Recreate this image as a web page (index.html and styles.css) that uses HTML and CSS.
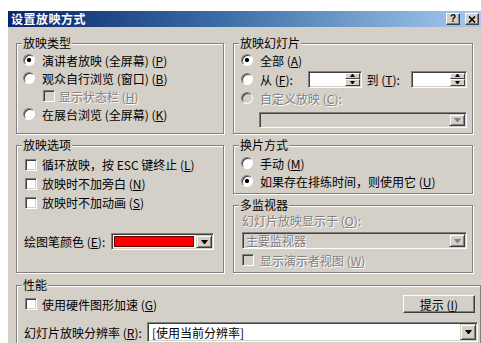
FILE: index.html
```html
<!DOCTYPE html>
<html lang="zh-CN">
<head>
  <meta charset="UTF-8">
  <title>设置放映方式</title>
  <link rel="stylesheet" href="styles.css">
</head>
<body>
  <div class="dialog">
    <div class="titlebar">
      <span class="title">设置放映方式</span>
      <div class="caption-btns">
        <span class="cbtn help">?</span>
        <span class="cbtn close"><svg width="8" height="7" viewBox="0 0 8 7"><path d="M1 0.5L7 6.5M7 0.5L1 6.5" stroke="#000" stroke-width="1.6"/></svg></span>
      </div>
    </div>

    <div class="content">
      <div class="columns">
        <!-- left column -->
        <div class="col col-left">
          <fieldset class="group g-type">
            <legend>放映类型</legend>
            <div class="row"><span class="radio on"></span>演讲者放映 (全屏幕) (<u>P</u>)</div>
            <div class="row"><span class="radio"></span>观众自行浏览 (窗口) (<u>B</u>)</div>
            <div class="row dis"><span class="check check-indent disabled"></span>显示状态栏 (<u>H</u>)</div>
            <div class="row"><span class="radio"></span>在展台浏览 (全屏幕) (<u>K</u>)</div>
          </fieldset>

          <fieldset class="group g-opts">
            <legend>放映选项</legend>
            <div class="row row-tall"><span class="check"></span>循环放映，按 ESC 键终止 (<u>L</u>)</div>
            <div class="row row-tall"><span class="check"></span>放映时不加旁白 (<u>N</u>)</div>
            <div class="row row-tall"><span class="check"></span>放映时不加动画 (<u>S</u>)</div>
            <div class="row pen-row">
              <span class="pen-label">绘图笔颜色 (<u>E</u>):</span>
              <div class="combo combo-pen">
                <span class="swatch"></span>
                <span class="drop"></span>
              </div>
            </div>
          </fieldset>
        </div>

        <!-- right column -->
        <div class="col col-right">
          <fieldset class="group g-slides">
            <legend>放映幻灯片</legend>
            <div class="row"><span class="radio on"></span>全部 (<u>A</u>)</div>
            <div class="row row-spin">
              <span class="radio"></span>
              <span class="from-label">从 (<u>F</u>):</span>
              <div class="spin spin-from">
                <span class="spin-field"></span>
                <span class="spin-btns"><span class="sbtn up"></span><span class="sbtn down"></span></span>
              </div>
              <span class="to-label">到 (<u>T</u>):</span>
              <div class="spin spin-to">
                <span class="spin-field"></span>
                <span class="spin-btns"><span class="sbtn up"></span><span class="sbtn down"></span></span>
              </div>
            </div>
            <div class="row dis"><span class="radio disabled"></span>自定义放映 (<u>C</u>):</div>
            <div class="combo combo-custom disabled">
              <span class="combo-text"></span>
              <span class="drop"></span>
            </div>
          </fieldset>

          <fieldset class="group g-switch">
            <legend>换片方式</legend>
            <div class="row"><span class="radio"></span>手动 (<u>M</u>)</div>
            <div class="row"><span class="radio on"></span>如果存在排练时间，则使用它 (<u>U</u>)</div>
          </fieldset>

          <fieldset class="group g-mon">
            <legend>多监视器</legend>
            <div class="row row-text dis">幻灯片放映显示于 (<u>O</u>):</div>
            <div class="combo combo-mon disabled">
              <span class="combo-text dis">主要监视器</span>
              <span class="drop"></span>
            </div>
            <div class="row row-mon dis"><span class="check disabled"></span>显示演示者视图 (<u>W</u>)</div>
          </fieldset>
        </div>
      </div>

      <fieldset class="group g-perf">
        <legend>性能</legend>
        <div class="row perf-row">
          <span class="check"></span><span>使用硬件图形加速 (<u>G</u>)</span>
          <span class="button">提示 (<u>I</u>)</span>
        </div>
        <div class="row res-row">
          <span class="res-label">幻灯片放映分辨率 (<u>R</u>):</span>
          <div class="combo combo-res">
            <span class="combo-text">[使用当前分辨率]</span>
            <span class="drop"></span>
          </div>
        </div>
      </fieldset>
    </div>
  </div>
</body>
</html>
```

FILE: styles.css
```css
*{
  margin: 0;
  padding: 0;
  box-sizing: border-box;
}
body{
  background-color: #fff;
  font-family: "Noto Sans CJK SC", "Noto Sans", sans-serif;
  font-size: 12px;
  color: #000;
}
u{
  text-decoration: underline;
  text-underline-offset: 1px;
}
.dialog{
  width: 473px;
  height: 332px;
  margin: 11px 0 0 8px;
  background-color: #d4d0c8;
  overflow: hidden;
}

/* title bar */
.titlebar{
  height: 16px;
  display: flex;
  align-items: center;
  justify-content: space-between;
  padding: 0 2px 0 3px;
  background: linear-gradient(to right, #0a246a, #3a6ea5 45%, #a6caf0);
}
.title{
  color: #fff;
  font-weight: 700;
  font-size: 12px;
  letter-spacing: 0.5px;
  line-height: 16px;
}
.caption-btns{
  display: flex;
  gap: 5px;
}
.cbtn{
  width: 14px;
  height: 12px;
  display: flex;
  align-items: center;
  justify-content: center;
  background-color: #d4d0c8;
  border: 1px solid;
  border-color: #fff #404040 #404040 #fff;
  box-shadow: inset -1px -1px #808080;
  font-family: "Liberation Sans", sans-serif;
  font-weight: 700;
  font-size: 10px;
  line-height: 10px;
}

/* layout */
.content{
  padding: 9px 0 0 8px;
  display: flex;
  flex-direction: column;
  gap: 5px;
}
.columns{
  display: flex;
  gap: 9px;
}
.col{
  display: flex;
  flex-direction: column;
  gap: 4px;
}
.col-left{ width: 208px; }
.col-right{ width: 240px; }

/* etched group boxes */
.group{
  border: 1px solid #808080;
  box-shadow: inset 1px 1px #fff, 1px 1px #fff;
  padding: 0 6px 0 6px;
  min-width: 0;
}
.group legend{
  padding: 0 1px;
  margin-left: -1px;
  line-height: 14px;
  background-color: #d4d0c8;
}
.g-type{ padding-top: 1px; padding-bottom: 10px; }
.g-opts{ padding-top: 3px; padding-bottom: 22px; }
.g-slides{ padding: 1px 5px 5px 7px; }
.g-slides legend{ margin-left: -2px; }
.g-switch{ padding: 2px 5px 3px 7px; }
.g-switch legend{ margin-left: -2px; }
.g-mon{ padding: 1px 5px 4px 8px; }
.g-mon legend{ margin-left: -3px; }
.g-perf{ padding: 3px 5px 0 6px; height: 70px; }

/* rows */
.row{
  display: flex;
  align-items: center;
  height: 18px;
  white-space: nowrap;
}
.row-tall{ height: 19px; }
.dis{
  color: #808080;
  text-shadow: 1px 1px #fff;
}

/* radio buttons */
.radio{
  flex: none;
  width: 12px;
  height: 12px;
  margin-right: 7px;
  border-radius: 50%;
  border: 1px solid;
  border-color: #808080 #fff #fff #808080;
  box-shadow: inset 1px 1px #404040;
  background-color: #fff;
}
.radio.on{
  background: radial-gradient(circle at 50% 50%, #000 0, #000 1.8px, #fff 2.4px);
}
.radio.disabled{
  background-color: #d4d0c8;
}

/* check boxes */
.check{
  flex: none;
  width: 12px;
  height: 12px;
  margin: 0 5px 0 2px;
  border: 1px solid;
  border-color: #808080 #fff #fff #808080;
  box-shadow: inset 1px 1px #404040, inset -1px -1px #d4d0c8;
  background-color: #fff;
}
.check.disabled{ background-color: #d4d0c8; }
.check-indent{ margin: 0 4px 0 20px; }

/* sunken fields with drop buttons */
.combo{
  display: flex;
  height: 17px;
  padding: 1px;
  background-color: #fff;
  border: 1px solid;
  border-color: #808080 #fff #fff #808080;
  box-shadow: inset 1px 1px #404040, inset -1px -1px #d4d0c8;
}
.combo.disabled{ background-color: #d4d0c8; }
.combo-text{
  flex: 1;
  display: flex;
  align-items: center;
  padding-left: 2px;
  white-space: nowrap;
}
.drop{
  flex: none;
  width: 16px;
  display: flex;
  align-items: center;
  justify-content: center;
  background-color: #d4d0c8;
  border: 1px solid;
  border-color: #d4d0c8 #404040 #404040 #d4d0c8;
  box-shadow: inset 1px 1px #fff, inset -1px -1px #808080;
}
.drop::before{
  content: "";
  width: 1px;
  height: 0;
  border-top: 4px solid #000;
  border-left: 3px solid transparent;
  border-right: 3px solid transparent;
}
.disabled .drop::before{ border-top-color: #808080; }

.pen-row{
  height: 17px;
  margin-top: 21px;
}
.pen-label{ width: 87px; margin-left: 1px; }
.combo-pen{
  width: 103px;
  gap: 2px;
}
.swatch{
  flex: 1;
  margin: 1px 0 1px 1px;
  background-color: #f00;
  border: 1px solid #600;
}

.row-spin{ height: 20px; }
.from-label{ width: 48px; }
.to-label{ width: 45px; margin-left: 5px; }
.spin{
  display: flex;
  height: 17px;
  padding: 1px;
  background-color: #fff;
  border: 1px solid;
  border-color: #808080 #fff #fff #808080;
  box-shadow: inset 1px 1px #404040, inset -1px -1px #d4d0c8;
}
.spin-from{ width: 54px; }
.spin-to{ width: 56px; }
.spin-field{ flex: 1; }
.spin-btns{
  width: 15px;
  display: flex;
  flex-direction: column;
}
.sbtn{
  flex: 1;
  display: flex;
  align-items: center;
  justify-content: center;
  background-color: #d4d0c8;
  border: 1px solid;
  border-color: #fff #404040 #404040 #fff;
}
.sbtn::before{
  content: "";
  width: 1px;
  height: 0;
  border-left: 2px solid transparent;
  border-right: 2px solid transparent;
}
.sbtn.up::before{ border-bottom: 3px solid #000; }
.sbtn.down::before{ border-top: 3px solid #000; }

.combo-custom{
  width: 208px;
  height: 16px;
  margin: 5px 0 0 18px;
}

.row-text{ height: 14px; }
.combo-mon{
  width: 225px;
  margin-top: 5px;
}
.row-mon{
  height: 16px;
  margin-top: 3px;
}
.row-mon .check{ margin: 0 6px 0 0; }

/* performance */
.perf-row .button{ margin-left: auto; }
.button{
  width: 72px;
  height: 18px;
  display: flex;
  align-items: center;
  justify-content: center;
  background-color: #d4d0c8;
  border: 1px solid;
  border-color: #fff #404040 #404040 #fff;
  box-shadow: inset -1px -1px #808080;
}
.res-row{
  height: 20px;
  margin-top: 9px;
}
.res-label{ width: 123px; margin-left: 1px; }
.combo-res{
  flex: 1;
  height: 20px;
  margin-right: -3px;
}
.combo-res .combo-text{ padding-left: 3px; }
```
